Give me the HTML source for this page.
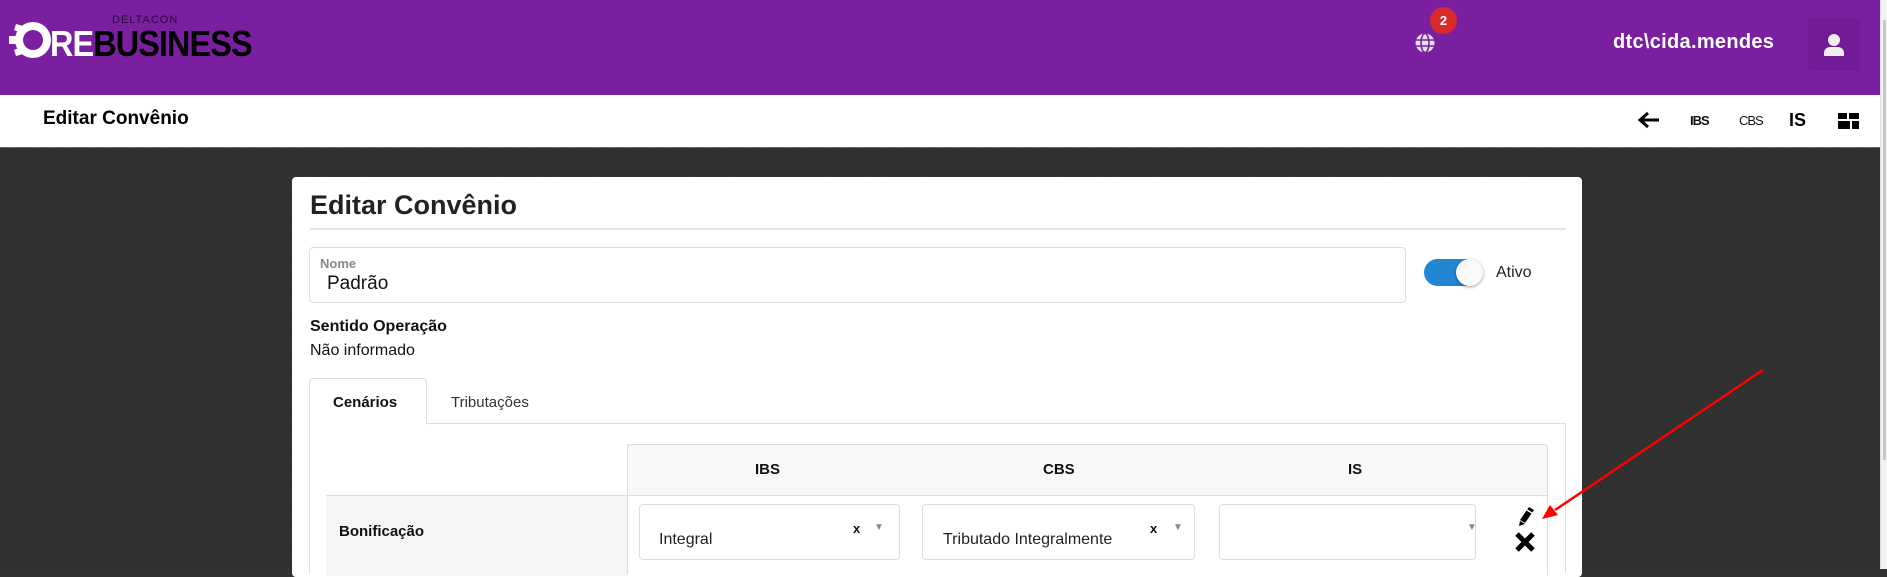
<!DOCTYPE html>
<html><head><meta charset="utf-8"><style>
*{margin:0;padding:0;box-sizing:border-box}
body{width:1887px;height:569px;overflow:hidden;font-family:"Liberation Sans",Arial,sans-serif;background:#333;position:relative}
.a{position:absolute}
</style></head><body>
<div class="a" style="left:0;top:0;width:1880px;height:95px;background:#7a1fa0"></div>
<div class="a" style="left:0;top:95px;width:1880px;height:53px;background:#fff;border-bottom:1px solid #666"></div>
<div class="a" style="left:0;top:148px;width:1880px;height:421px;background:repeating-linear-gradient(45deg,#323232 0 2px,#2e2e2e 2px 4px)"></div>
<div class="a" style="left:1880px;top:0;width:7px;height:569px;background:#f3f3f3;border-left:1px solid #ddd"></div>
<div class="a" style="left:1883px;top:20px;width:3px;height:440px;background:#c8c8c8"></div>
<!-- logo -->
<svg class="a" style="left:9px;top:19px" width="42" height="42" viewBox="0 0 42 42"><g fill="#fff"><path fill-rule="evenodd" d="M24 3a18 18 0 1 0 0 36a18 18 0 1 0 0-36zm0 8a10 10 0 1 1 0 20a10 10 0 1 1 0-20z"/><path d="M7 5l7 2-2 7-7-3z"/><rect x="0" y="17" width="8" height="8"/><path d="M5 31l7-3 2 7-7 2z"/></g></svg>
<div class="a" style="left:112px;top:14px;font-size:11px;letter-spacing:1px;color:#2a0a3a">DELTACON</div>
<div class="a" style="left:50px;top:24px;font-size:36px;font-weight:bold;color:#fff;letter-spacing:-1px;line-height:40px;transform:scaleX(0.9);transform-origin:0 0;white-space:nowrap">RE<span style="color:#000">BUSINESS</span></div>
<!-- globe -->
<svg class="a" style="left:1414px;top:32px" width="22" height="22" viewBox="0 0 22 22"><circle cx="11" cy="11" r="9.5" fill="#e8dcef"/><g stroke="#7a1fa0" stroke-width="1.6" fill="none"><ellipse cx="11" cy="11" rx="4" ry="9.5"/><line x1="1.5" y1="8" x2="20.5" y2="8"/><line x1="1.5" y1="14" x2="20.5" y2="14"/></g></svg>
<div class="a" style="left:1430px;top:7px;width:27px;height:27px;border-radius:50%;background:#d92b2b;color:#fff;font-size:13px;font-weight:bold;text-align:center;line-height:27px">2</div>
<div class="a" style="left:1613px;top:31px;font-size:20px;font-weight:bold;color:#fff;letter-spacing:0.3px">dtc\cida.mendes</div>
<div class="a" style="left:1808px;top:18px;width:52px;height:53px;background:#711b96;border-radius:3px"></div>
<svg class="a" style="left:1823px;top:33px" width="22" height="24" viewBox="0 0 22 24"><circle cx="11" cy="7" r="6" fill="#eee"/><path d="M1 23v-3a6 6 0 0 1 6-6h8a6 6 0 0 1 6 6v3z" fill="#eee"/></svg>
<!-- subheader -->
<div class="a" style="left:43px;top:108px;font-size:19px;font-weight:bold;color:#000">Editar Convênio</div>
<svg class="a" style="left:1637px;top:111px" width="24" height="18" viewBox="0 0 24 18"><path d="M22 9H4M11 2L3 9l8 7" stroke="#000" stroke-width="3" fill="none"/></svg>
<div class="a" style="left:1690px;top:113px;font-size:13px;font-weight:bold;color:#111;letter-spacing:-1px">IBS</div>
<div class="a" style="left:1739px;top:113px;font-size:13px;color:#111;letter-spacing:-1px">CBS</div>
<div class="a" style="left:1789px;top:110px;font-size:18px;font-weight:900;color:#000">IS</div>
<div class="a" style="left:1838px;top:113px;width:21px;height:16px;background:#000"></div>
<div class="a" style="left:1838px;top:119px;width:21px;height:2px;background:#fff"></div>
<div class="a" style="left:1847px;top:113px;width:2px;height:6px;background:#fff"></div>
<div class="a" style="left:1850px;top:121px;width:2px;height:8px;background:#fff"></div>
<!-- card -->
<div class="a" style="left:292px;top:177px;width:1290px;height:400px;background:#fff;border-radius:4px"></div>
<div class="a" style="left:310px;top:190px;font-size:27px;font-weight:bold;color:#222">Editar Convênio</div>
<div class="a" style="left:310px;top:228px;width:1256px;height:2px;background:#e3e3e3"></div>
<div class="a" style="left:309px;top:247px;width:1097px;height:56px;border:1px solid #ddd;border-radius:4px"></div>
<div class="a" style="left:320px;top:256px;font-size:13px;font-weight:bold;color:#888">Nome</div>
<div class="a" style="left:327px;top:273px;font-size:19px;color:#111">Padrão</div>
<div class="a" style="left:1424px;top:259px;width:56px;height:27px;border-radius:14px;background:#2286d2"></div>
<div class="a" style="left:1456px;top:259px;width:27px;height:27px;border-radius:50%;background:#fafafa;box-shadow:0 1px 3px rgba(0,0,0,.4)"></div>
<div class="a" style="left:1496px;top:264px;font-size:16px;color:#222">Ativo</div>
<div class="a" style="left:310px;top:318px;font-size:16px;font-weight:bold;color:#111">Sentido Operação</div>
<div class="a" style="left:310px;top:342px;font-size:16px;color:#111">Não informado</div>
<!-- tabs -->
<div class="a" style="left:426px;top:423px;width:1140px;height:1px;background:#ddd"></div>
<div class="a" style="left:1565px;top:423px;width:1px;height:150px;background:#ddd"></div>
<div class="a" style="left:309px;top:378px;width:118px;height:47px;border:1px solid #ddd;border-bottom:none;border-radius:4px 4px 0 0;background:#fff"></div>
<div class="a" style="left:309px;top:424px;width:1px;height:150px;background:#ddd"></div>
<div class="a" style="left:333px;top:394px;font-size:15px;font-weight:bold;color:#111">Cenários</div>
<div class="a" style="left:451px;top:394px;font-size:15px;color:#333">Tributações</div>
<!-- table -->
<div class="a" style="left:627px;top:444px;width:921px;height:52px;background:#f7f8fa;border:1px solid #ddd;border-bottom:none;border-radius:4px 4px 0 0"></div>
<div class="a" style="left:326px;top:495px;width:1222px;height:80px;background:#fff;border-top:1px solid #ddd;border-right:1px solid #ddd"></div>
<div class="a" style="left:326px;top:496px;width:301px;height:80px;background:#f5f5f5"></div>
<div class="a" style="left:627px;top:444px;width:1px;height:130px;background:#ddd"></div>
<div class="a" style="left:755px;top:461px;font-size:15px;font-weight:bold;color:#111">IBS</div>
<div class="a" style="left:1043px;top:461px;font-size:15px;font-weight:bold;color:#111">CBS</div>
<div class="a" style="left:1348px;top:461px;font-size:15px;font-weight:bold;color:#111">IS</div>
<div class="a" style="left:339px;top:523px;font-size:15px;font-weight:bold;color:#111">Bonificação</div>
<div class="a" style="left:639px;top:504px;width:261px;height:56px;border:1px solid #ddd;border-radius:4px;background:#fff"></div>
<div class="a" style="left:922px;top:504px;width:273px;height:56px;border:1px solid #ddd;border-radius:4px;background:#fff"></div>
<div class="a" style="left:1219px;top:504px;width:257px;height:56px;border:1px solid #ddd;border-radius:4px;background:#fff"></div>
<div class="a" style="left:659px;top:531px;font-size:16px;color:#222">Integral</div>
<div class="a" style="left:943px;top:531px;font-size:16px;color:#222">Tributado Integralmente</div>
<div class="a" style="left:853px;top:521px;font-size:13px;font-weight:bold;color:#111">x</div>
<div class="a" style="left:1150px;top:521px;font-size:13px;font-weight:bold;color:#111">x</div>
<div class="a" style="left:874px;top:522px;font-size:10px;color:#888">▼</div>
<div class="a" style="left:1173px;top:522px;font-size:10px;color:#888">▼</div>
<div class="a" style="left:1467px;top:522px;font-size:10px;color:#888" >▼</div>
<svg class="a" style="left:1516px;top:505px" width="20" height="22" viewBox="0 0 20 22"><path d="M13 2l5 3-9 13-5-3z" fill="#000"/><path d="M4 16l5 3-6 2z" fill="#000"/><line x1="11" y1="5" x2="16" y2="8" stroke="#fff" stroke-width="1.5"/></svg>
<svg class="a" style="left:1514px;top:531px" width="22" height="22" viewBox="0 0 22 22"><path d="M3 3l16 16M19 3L3 19" stroke="#000" stroke-width="5"/></svg>
<!-- red arrow -->
<svg class="a" style="left:0;top:0" width="1887" height="569"><line x1="1763" y1="370" x2="1555" y2="510" stroke="#f00" stroke-width="2.5"/><path d="M1542 519l8-14 8 10z" fill="#f00"/></svg>
</body></html>
